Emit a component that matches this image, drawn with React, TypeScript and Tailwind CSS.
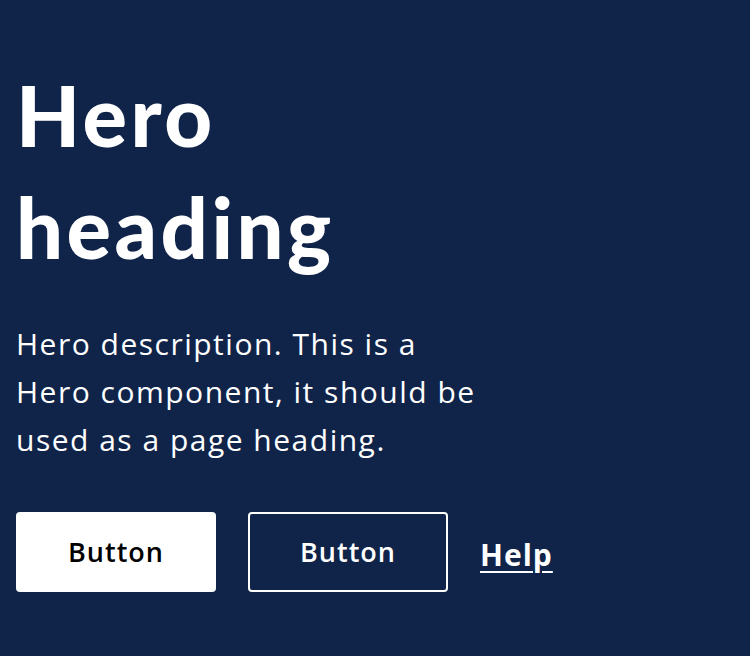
export default function App() {
  return (
    <div className="min-h-[656px] w-full bg-[#10244a] px-4 pt-[59px] pb-16 text-white" style={{ fontFamily: '"Open Sans", sans-serif' }}>
      <h1 className="m-0 text-[83px] leading-[112px] font-black tracking-[3.5px]" style={{ fontFamily: 'Lato, sans-serif' }}>
        Hero
        <br />
        heading
      </h1>
      <p className="mt-[37px] w-[480px] text-[30px] leading-[48px] tracking-[1.5px]">
        Hero description. This is a Hero component, it should be used as a page heading.
      </p>
      <div className="mt-[48px] flex items-center gap-8">
        <button className="h-20 w-[200px] rounded bg-white text-[27px] font-semibold tracking-[1px] text-black">Button</button>
        <button className="h-20 w-[200px] rounded border-2 border-white text-[27px] font-semibold tracking-[1px] text-white">Button</button>
        <a href="#" className="pt-1 text-[30px] font-bold tracking-[1px] underline decoration-2 underline-offset-[5px]">Help</a>
      </div>
    </div>
  );
}
